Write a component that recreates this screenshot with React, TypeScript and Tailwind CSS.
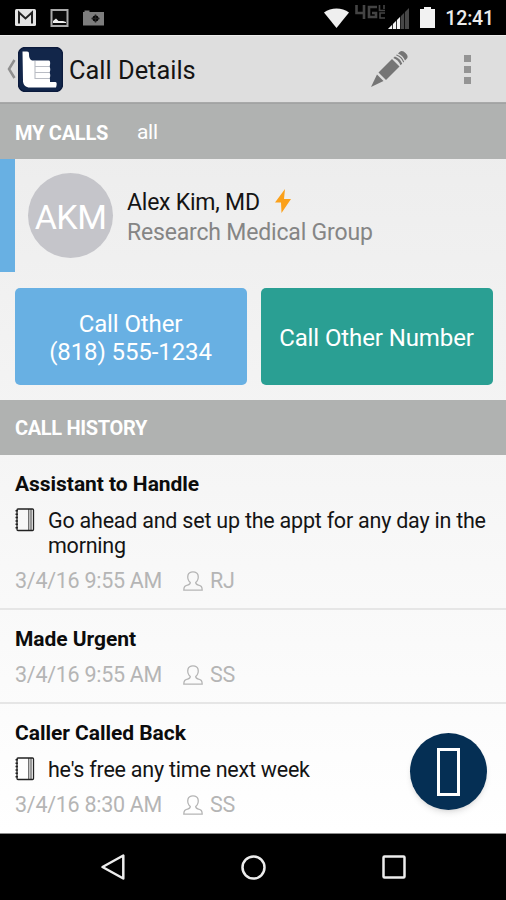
interface HistoryEntry {
  title: string;
  note?: string;
  time: string;
  by: string;
}

const history: HistoryEntry[] = [
  {
    title: 'Assistant to Handle',
    note: 'Go ahead and set up the appt for any day in the morning',
    time: '3/4/16 9:55 AM',
    by: 'RJ',
  },
  { title: 'Made Urgent', time: '3/4/16 9:55 AM', by: 'SS' },
  { title: 'Caller Called Back', note: "he's free any time next week", time: '3/4/16 8:30 AM', by: 'SS' },
];

function StatusBar() {
  return (
    <div className="h-[35px] shrink-0 bg-black flex items-center pl-[15px] pr-[12px] text-[#ececec]">
      {/* Gmail */}
      <svg width="21" height="17" viewBox="0 0 21 17">
        <rect width="21" height="17" rx="1.5" fill="#e4e4e4" />
        <path d="M4 14.500V3.500l6.500 6 6.500-6v11" fill="none" stroke="#222" strokeWidth="2" />
      </svg>
      {/* Screenshot */}
      <svg className="ml-3.5" width="19" height="18" viewBox="0 0 19 18">
        <rect x="1.500" y="1" width="16" height="16" fill="#0a0a0a" stroke="#aaa" strokeWidth="2" />
        <path d="M3 14v-2l3-2.500 2.500 2.500H13l3 1v1z" fill="#f0f0f0" />
      </svg>
      {/* Camera */}
      <svg className="ml-3.5" width="21" height="16" viewBox="0 0 21 16">
        <path d="M0 2h1.500V.5h5V2H21v13.500H0z" fill="#7d7d7d" />
        <circle cx="12.500" cy="8.500" r="3" fill="#000" />
        <path d="M12.500 4.500v8M8.500 8.500h8" stroke="#222" strokeWidth="1.500" />
      </svg>

      <div className="ml-auto flex items-center">
        <svg width="25" height="20" viewBox="0 0 25 20">
          <path d="M0 4.500C7-1 18-1 25 4.500L12.500 20z" fill="#efefef" />
        </svg>
        {/* 4G LTE */}
        <svg className="ml-1.5 mb-2.5" width="31" height="15" viewBox="0 0 31 15">
          <g fill="none" stroke="#444" strokeWidth="2.600">
            <path d="M1.500 0v8H10M9 0v14" />
            <path d="M22 2h-8v10h7V8h-4" />
            <path d="M24.500 0v5.500H30M30 8h-5v5h5M29 0v4" strokeWidth="1.600" />
          </g>
        </svg>
        <svg className="ml-[2px] mt-px" width="21" height="21" viewBox="0 0 21 21">
          <path d="M0 21L21 0v21z" fill="#474747" />
          <path d="M0 21L12.500 8.500V21z" fill="#f2f2f2" />
          <path d="M4.500 16v5M8.500 12v9M12.500 8v13M16.500 4v17" stroke="#000" strokeWidth=".8" />
        </svg>
        <svg className="ml-[11px]" width="15" height="21" viewBox="0 0 15 21">
          <path d="M4 0h7v2h4v19H0V2h4z" fill="#f2f2f2" />
        </svg>
        <span className="ml-[10px] text-[19.500px] tracking-[-0.150px] leading-none font-medium pt-[3px]">12:41</span>
      </div>
    </div>
  );
}

function AppBar() {
  return (
    <header className="h-[68px] shrink-0 bg-[#dedede] border-t border-t-[#ededed] border-b border-b-[#a8a9a9] flex items-center pl-[7px] pr-[35px]">
      <svg width="9" height="20" viewBox="0 0 9 20">
        <path d="M7.500 1L2 10l5.500 9" fill="none" stroke="#8f8f8f" strokeWidth="2.500" />
      </svg>
      <svg className="ml-[2px]" width="45" height="45" viewBox="0 0 45 45">
        <rect x=".5" y=".5" width="44" height="44" rx="7" fill="#12264a" stroke="#0b1a3c" strokeWidth="1.500" />
        <path
          d="M4.500 4.500h4.500c1.500 0 2 .8 2 2.500 0 3 .5 5.500 3 6.500H31c1.500 0 1.500 4.500.5 6 1 1.500 1 4.500 0 6 1 1.500 1 4.500 0 6 .8 1 .5 2 .5 3.500h5.500c1.500 0 1.500 3 .5 5.500H12c-4.500 0-6.500-2.500-7-6z"
          fill="#fff"
        />
        <path d="M17 14v17.500M16.500 19.500h14.500M16.500 25.500h14.500M16.500 31.500h14.500" fill="none" stroke="#b9bcc4" strokeWidth="1.100" />
      </svg>
      <h1 className="ml-[6px] pt-[3px] text-[25.400px] leading-none">Call Details</h1>
      <svg className="ml-auto" width="38" height="38" viewBox="0 0 38 38" fill="#757575">
        <path d="M1 37L7 24.500l6.500 6.500z" />
        <path d="M8.500 22.500L22 9l7.500 7.500L16 30z" />
        <path d="M23.300 8l1.600-1.600q5.500 2 7.300 7.300L30.500 15.300q-2-5.300-7.200-7.300z" />
        <path d="M26 5.300l.8-.8q5.500 2 7.300 7.300l-.8.800q-2-5.300-7.300-7.300z" />
        <path d="M28 3.500l1.500-1.500c2-1.800 4-1 6 1s3 4 1 6L35 10.500q-2-5-7-7z" />
      </svg>
      <div className="ml-[56px] flex flex-col gap-[4px]">
        <span className="size-[7px] bg-[#949494]" />
        <span className="size-[7px] bg-[#949494]" />
        <span className="size-[7px] bg-[#949494]" />
      </div>
    </header>
  );
}

function NotebookIcon() {
  return (
    <svg className="shrink-0" width="20" height="24" viewBox="0 0 20 24" fill="none" stroke="#222">
      <rect x="2" y="1" width="16.500" height="21.500" rx="1" strokeWidth="1.300" />
      <path d="M13.800 1v21.500M16 1v21.500" strokeWidth=".9" />
      <path d="M1.700 2v20" strokeWidth="2.400" strokeDasharray="1.500 1.900" />
    </svg>
  );
}

function PersonIcon() {
  return (
    <svg width="20" height="20" viewBox="0 0 20 20" fill="none" stroke="#b5b5b5" strokeWidth="1.300">
      <path d="M7.300 11.500C5 9.500 4.500 6 5 4c.6-2 2.500-3.200 5-3.200S14.400 2 15 4c.5 2 0 5.500-2.300 7.500 0 1.800.8 2 2.800 2.600 2.500.8 3.700 1.300 3.700 5.100H.8c0-3.800 1.200-4.300 3.700-5.100 2-.6 2.800-.8 2.800-2.600z" />
    </svg>
  );
}

function HistoryRow({ entry }: { entry: HistoryEntry }) {
  return (
    <li className="pl-[15px] pt-4 pb-[14px] border-b-2 border-[#e6e6e6] last:border-b-0">
      <h3 className="text-[21px] leading-[26px] tracking-[-0.040px] font-bold text-[#0c0c0c]">{entry.title}</h3>
      {entry.note && (
        <div className="mt-[11px] mb-px flex">
          <NotebookIcon />
          <p className="ml-[13px] w-[450px] text-[21.500px] leading-[25px] tracking-[-0.230px] text-[#141414]">{entry.note}</p>
        </div>
      )}
      <div className="mt-[10px] h-[26px] flex items-center text-[21.500px] leading-[26px] tracking-[-0.280px] text-[#b5b5b5]">
        <span className="w-[168px]">{entry.time}</span>
        <PersonIcon />
        <span className="ml-[7px]">{entry.by}</span>
      </div>
    </li>
  );
}

function NavBar() {
  return (
    <nav className="h-[67px] shrink-0 bg-black border-t border-[#8c8c8c] flex items-center pl-[100px] text-[#ededed]">
      <svg width="26" height="28" viewBox="0 0 26 28" fill="none" stroke="currentColor" strokeWidth="2.500">
        <path d="M23.300 2.500v23L2.500 14z" strokeLinejoin="round" />
      </svg>
      <svg className="ml-[114px]" width="27" height="27" viewBox="0 0 27 27" fill="none" stroke="currentColor" strokeWidth="2.500">
        <circle cx="13.500" cy="13.500" r="11" />
      </svg>
      <svg className="ml-[114px]" width="26" height="26" viewBox="0 0 26 26" fill="none" stroke="currentColor" strokeWidth="2.500">
        <rect x="2.500" y="2.500" width="21" height="21" rx="1" />
      </svg>
    </nav>
  );
}

export default function App() {
  return (
    <div className="w-[506px] h-[900px] flex flex-col overflow-hidden font-['Roboto',sans-serif] text-[#141414]">
      <StatusBar />
      <AppBar />

      <main className="relative h-[730px] flex flex-col bg-linear-to-b from-[#ececec] to-white">
        <div className="h-14 shrink-0 bg-[#b0b2b1] border-t border-[#a2a3a3] flex items-center pl-[15px] pt-[2px] text-white">
          <span className="text-[20px] tracking-[-0.250px] font-bold w-[122px]">MY CALLS</span>
          <span className="text-[21px] tracking-[-0.300px]">all</span>
        </div>

        {/* Contact */}
        <section className="h-[113px] shrink-0 flex items-center border-l-[15px] border-[#68b0e3] pl-[13px]">
          <div className="size-[85px] rounded-full bg-[#c5c5ca] flex items-center justify-center text-white text-[34px] tracking-[-0.500px] pt-[3px]">
            AKM
          </div>
          <div className="ml-[14px] pt-[5px]">
            <div className="flex items-center h-[30px]">
              <span className="text-[23px] tracking-[-0.230px]">Alex Kim, MD</span>
              <svg className="ml-[14px] mb-[5px]" width="18" height="26" viewBox="0 0 18 26">
                <path d="M11 1L1 14.500h6L7.500 25 17 11h-7z" fill="#fba11b" />
              </svg>
            </div>
            <div className="text-[23px] leading-[30px] tracking-[-0.180px] text-[#858585]">Research Medical Group</div>
          </div>
        </section>

        <div className="pl-[14.500px] pr-[13.500px] pt-4 pb-[15px] flex gap-[14px] text-white text-[24px] leading-7 tracking-[-0.100px] text-center">
          <button className="h-[97px] flex-1 rounded-[5px] bg-[#68b0e3] pt-[2px]">
            Call Other
            <br />
            (818) 555-1234
          </button>
          <button className="h-[97px] flex-1 rounded-[5px] bg-[#2a9f93] pt-[2px]">Call Other Number</button>
        </div>

        <div className="h-[55px] shrink-0 bg-[#b0b2b1] flex items-center pl-[15px] pt-px text-[20px] tracking-[-0.330px] font-bold text-white">
          CALL HISTORY
        </div>

        <ul>
          {history.map((entry, i) => (
            <HistoryRow key={i} entry={entry} />
          ))}
        </ul>

        <button className="absolute right-[19px] bottom-[23px] size-[77px] rounded-full bg-[#052f54] shadow-md flex items-center justify-center">
          <span className="w-[23px] h-[48px] border-[3px] border-white" />
        </button>
      </main>

      <NavBar />
    </div>
  );
}
